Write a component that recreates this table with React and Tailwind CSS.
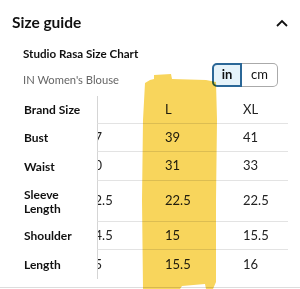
import React from "react";

const rows = [
  { label: "Bust", v: ["37", "39", "41"], h: "h-[28px]" },
  { label: "Waist", v: ["30", "31", "33"], h: "h-[29px]" },
  { label: ["Sleeve", "Length"], v: ["22.5", "22.5", "22.5"], h: "h-[41px]" },
  { label: "Shoulder", v: ["14.5", "15", "15.5"], h: "h-[28px]" },
  { label: "Length", v: ["15", "15.5", "16"], h: "h-[29px]", last: true },
];

function Row({ label, v, h, last }) {
  return (
    <div className={`flex ${h}`}>
      <div className="w-[97px] shrink-0 pl-[24px] flex flex-col justify-center font-bold text-[12px] leading-[14px] text-[#111]">
        {Array.isArray(label) ? label.map((l) => <span key={l}>{l}</span>) : label}
      </div>
      <div className={`flex-1 overflow-hidden border-l border-[#d5d5d5] ${last ? "" : "border-b border-b-[#e3e3e3]"}`}>
        <div className="flex h-full items-center ml-[-11px] text-[13px] text-[#222]">
          {v.map((x, i) => (
            <div key={i} className="w-[78px] shrink-0">{x}</div>
          ))}
        </div>
      </div>
    </div>
  );
}

export default function App() {
  return (
    <div className="relative w-[300px] h-[289px] bg-white overflow-hidden" style={{ fontFamily: "Lato, 'Noto Sans', sans-serif" }}>
      <div className="flex items-center justify-between pl-[12px] pr-[12px] pt-[9px] h-[36px]">
        <div className="text-[15.5px] font-bold text-[#111]">Size guide</div>
        <svg width="12" height="8" viewBox="0 0 12 8">
          <polyline points="1,7 6,2 11,7" fill="none" stroke="#111" strokeWidth="1.8" />
        </svg>
      </div>
      <div className="pl-[23px] mt-[10px] text-[11.6px] font-bold text-[#111] leading-[16px]">Studio Rasa Size Chart</div>
      <div className="flex items-start justify-between pl-[23px] pr-[22px] mt-[1px]">
        <div className="pt-[10px] text-[11.2px] leading-[14px] text-[#666]">IN Women's Blouse</div>
        <div className="flex h-[24px] text-[13px]">
          <div className="w-[30px] flex items-center justify-center rounded-l-[5px] border-2 border-[#2b6797] bg-[#e6f3fa] font-bold text-[#111]">in</div>
          <div className="w-[36px] flex items-center justify-center rounded-r-[5px] border border-l-0 border-[#aaaaaa] text-[#111]">cm</div>
        </div>
      </div>
      <div className="mt-[9px] mr-[12px]">
        <Row label="Brand Size" v={["M", "L", "XL"]} h="h-[28px]" />
        {rows.map((r, i) => (
          <Row key={i} {...r} />
        ))}
      </div>
      <div className="absolute left-0 right-0 top-[287px] h-px bg-[#dddddd]" />
      <svg className="absolute left-0 top-0 pointer-events-none mix-blend-multiply" width="300" height="289">
        <path
          d="M145 83 L150 80 L154 79 L154 75 L171 74 L172 79 L206 80 L216 82 L217 120 L216 200 L216 282 L213 289 L206 289 L205 284 L182 286 L180 289 L143 289 L142 200 L143 120 Z"
          fill="#f8d55c"
        />
      </svg>
    </div>
  );
}
